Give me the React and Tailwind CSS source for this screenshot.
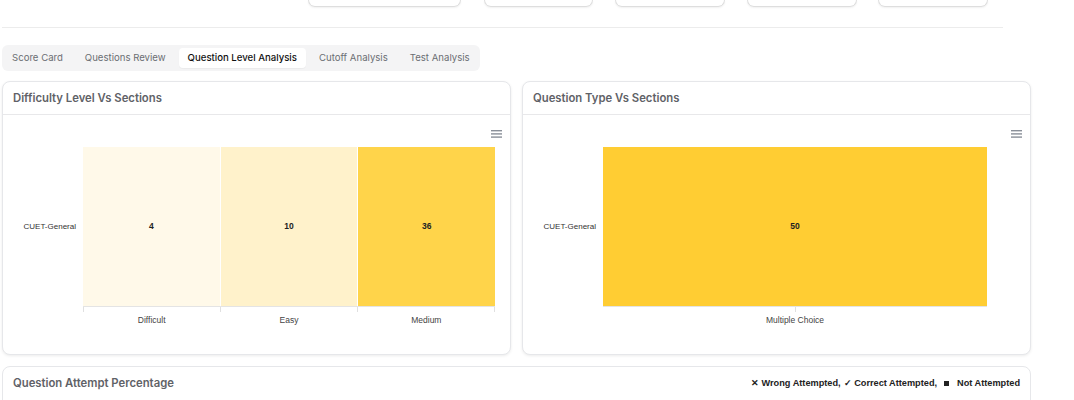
import React from 'react';

const font = { fontFamily: 'Inter, "Noto Sans", sans-serif' };

const tabs = ['Score Card', 'Questions Review', 'Question Level Analysis', 'Cutoff Analysis', 'Test Analysis'];

const MenuIcon = () => (
  <svg width="11" height="8" viewBox="0 0 11 8" className="absolute right-[8px] top-[15px]">
    <rect x="0" y="0" width="11" height="1.4" fill="#8a9099" />
    <rect x="0" y="3.2" width="11" height="1.4" fill="#8a9099" />
    <rect x="0" y="6.4" width="11" height="1.4" fill="#8a9099" />
  </svg>
);

const Card = ({ title, children, className }) => (
  <div className={`bg-white border border-[#e6e7ea] rounded-[8px] shadow-[0_1px_3px_rgba(0,0,0,0.08)] ${className}`}>
    <div className="h-[33px] border-b border-[#e8e8ea] flex items-center px-[10px]">
      <span className="text-[11.3px] font-semibold text-[#5f6267]">{title}</span>
    </div>
    {children}
  </div>
);

const Heatmap = ({ cells, left, right, ticks }) => (
  <div className="relative h-[239px]" style={{ fontFamily: '"Liberation Sans", Arial, sans-serif' }}>
    <MenuIcon />
    <div className="flex pt-[32px]">
      <div className={`${left} h-[159px] shrink-0 flex items-center justify-end pr-[7px] text-[8px] text-[#333]`}>CUET-General</div>
      <div className={`flex-1 ${right}`}>
        <div className="flex gap-[1px] h-[159px]">
          {cells.map((c) => (
            <div key={c.label} className={`flex-1 flex items-center justify-center text-[8.5px] font-bold text-[#222] ${c.bg}`}>
              {c.value}
            </div>
          ))}
        </div>
        <div className="flex h-[6px] border-t border-[#e4e4e4]">
          {cells.map((c, i) => (
            <div key={c.label} className={`flex-1 ${ticks ? 'border-l border-[#e0e0e0]' : ''} ${ticks && i === cells.length - 1 ? 'border-r' : ''} flex justify-center`}>
              {!ticks && <div className="w-px h-full bg-[#e0e0e0]" />}
            </div>
          ))}
        </div>
        <div className="flex mt-[2px]">
          {cells.map((c) => (
            <div key={c.label} className="flex-1 text-center text-[8.5px] text-[#444]">{c.label}</div>
          ))}
        </div>
      </div>
    </div>
  </div>
);

export default function App() {
  return (
    <div className="w-[1074px] h-[400px] overflow-hidden bg-white pl-[2px]" style={font}>
      <div className="h-[28px] w-[1001px] border-b border-[#ececec] flex items-start">
        <div className="ml-[306px] w-[153px] h-[7px] rounded-b-[8px] border border-t-0 border-[#dedede] shadow-[0_1px_2px_rgba(0,0,0,0.06)]" />
        <div className="ml-[23px] w-[109px] h-[7px] rounded-b-[8px] border border-t-0 border-[#dedede] shadow-[0_1px_2px_rgba(0,0,0,0.06)]" />
        <div className="ml-[22px] w-[110px] h-[7px] rounded-b-[8px] border border-t-0 border-[#dedede] shadow-[0_1px_2px_rgba(0,0,0,0.06)]" />
        <div className="ml-[22px] w-[110px] h-[7px] rounded-b-[8px] border border-t-0 border-[#dedede] shadow-[0_1px_2px_rgba(0,0,0,0.06)]" />
        <div className="ml-[21px] w-[110px] h-[7px] rounded-b-[8px] border border-t-0 border-[#dedede] shadow-[0_1px_2px_rgba(0,0,0,0.06)]" />
      </div>

      <div className="mt-[17px] inline-flex items-center gap-[4px] h-[26px] px-[1px] rounded-[6px] bg-[#f4f4f5]">
        {tabs.map((t) => (
          <div
            key={t}
            className={`h-[20px] px-[9px] flex items-center rounded-[4px] text-[9.6px] ${
              t === 'Question Level Analysis' ? 'bg-white text-[#111] font-medium shadow-[0_1px_1px_rgba(0,0,0,0.04)]' : 'text-[#6b6e73]'
            }`}
          >
            {t}
          </div>
        ))}
      </div>

      <div className="mt-[10px] flex gap-[11px] w-[1029px]">
        <Card title="Difficulty Level Vs Sections" className="flex-1">
          <Heatmap
            left="w-[80px]"
            right="mr-[15px]"
            ticks
            cells={[
              { label: 'Difficult', value: 4, bg: 'bg-[#fff9e9]' },
              { label: 'Easy', value: 10, bg: 'bg-[#fff2cb]' },
              { label: 'Medium', value: 36, bg: 'bg-[#ffd44a]' },
            ]}
          />
        </Card>
        <Card title="Question Type Vs Sections" className="flex-1">
          <Heatmap
            left="w-[80px]"
            right="mr-[43px]"
            cells={[{ label: 'Multiple Choice', value: 50, bg: 'bg-[#ffcd33]' }]}
          />
        </Card>
      </div>

      <div className="mt-[11px] w-[1029px] h-[60px] bg-white border border-[#e6e7ea] rounded-[8px]">
        <div className="h-[33px] flex items-center justify-between px-[10px]">
          <span className="text-[11.3px] font-semibold text-[#5f6267]">Question Attempt Percentage</span>
          <span className="text-[9.2px] font-semibold text-[#222] flex items-center gap-[3px]" style={{ fontFamily: '"Liberation Sans", Arial, sans-serif' }}>
            <span>✕ Wrong Attempted,</span>
            <span>✓ Correct Attempted,</span>
            <span className="inline-block w-[5px] h-[5px] bg-[#222] ml-[4px] mr-[5px]" />
            <span>Not Attempted</span>
          </span>
        </div>
      </div>
    </div>
  );
}
